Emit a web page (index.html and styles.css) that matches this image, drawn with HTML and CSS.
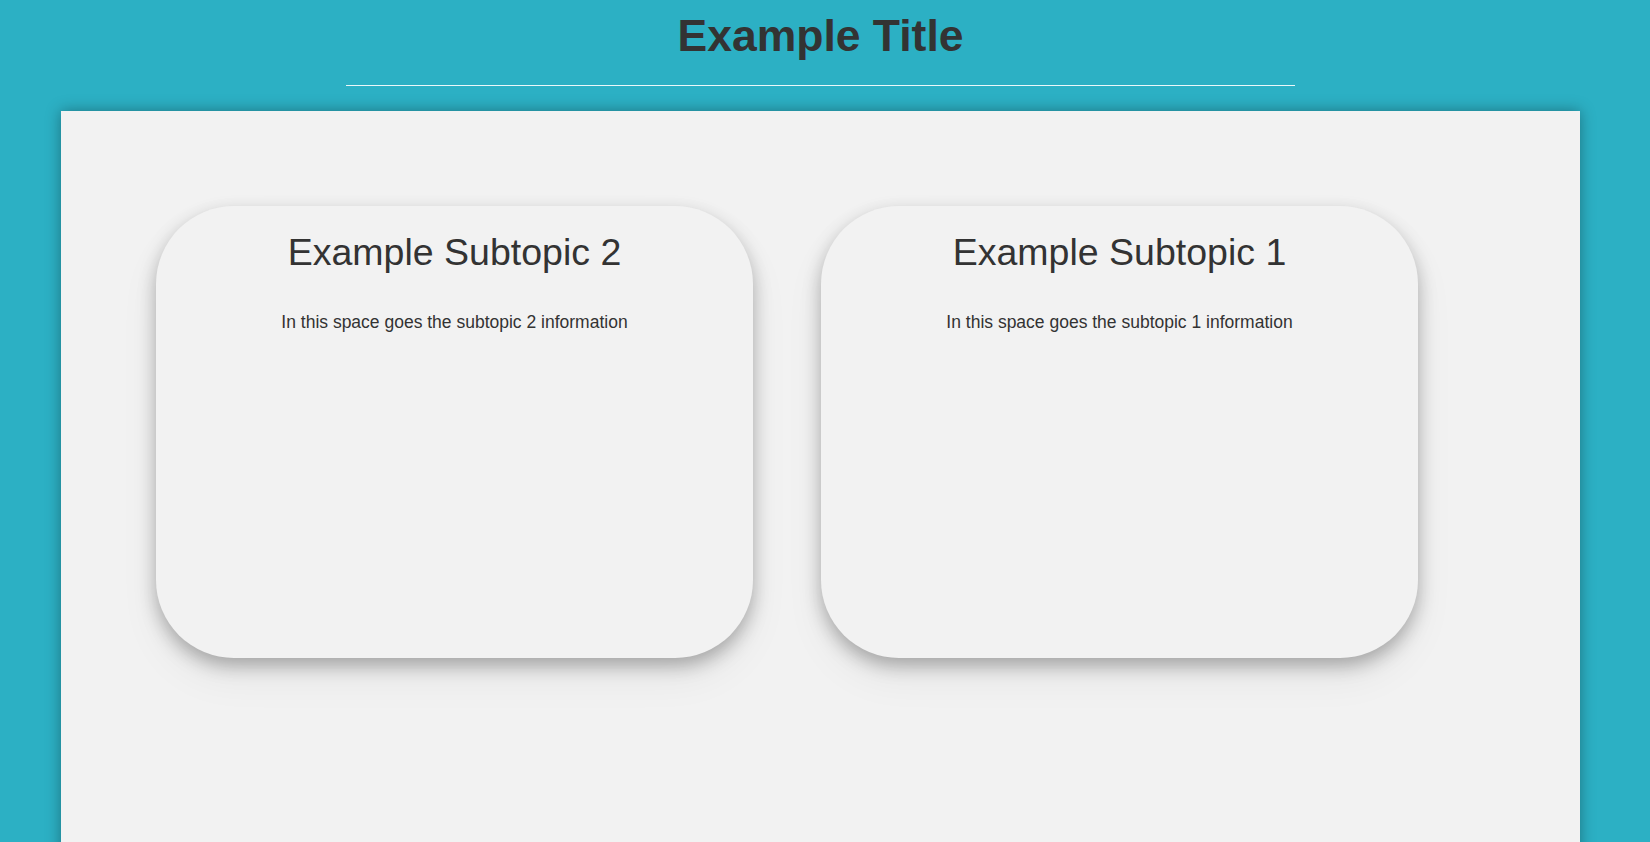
FILE: index.html
```html
<!DOCTYPE html>
<html lang="en">
<head>
<meta charset="utf-8">
<title>Example Title</title>
<link rel="stylesheet" href="styles.css">
</head>
<body>
<div class="page">
  <header class="header">
    <h1 class="title">Example Title</h1>
    <div class="rule"></div>
  </header>
  <main class="panel">
    <section class="card">
      <h2 class="card-title">Example Subtopic 2</h2>
      <p class="card-text">In this space goes the subtopic 2 information</p>
    </section>
    <section class="card">
      <h2 class="card-title">Example Subtopic 1</h2>
      <p class="card-text">In this space goes the subtopic 1 information</p>
    </section>
  </main>
</div>
</body>
</html>
```
FILE: styles.css
```css
html, body {
  margin: 0;
  padding: 0;
  background: #2cb0c4;
  overflow: hidden;
}
body {
  font-family: "Liberation Sans", Arial, sans-serif;
  color: #333333;
  height: 842px;
}
.page {
  width: 1641px;
  display: flex;
  flex-direction: column;
  align-items: center;
}
.header {
  display: flex;
  flex-direction: column;
  align-items: center;
  width: 100%;
}
.title {
  margin: 11px 0 0;
  font-size: 44.5px;
  line-height: 50px;
  font-weight: bold;
  color: #333333;
}
.rule {
  width: 949px;
  height: 1px;
  background: rgba(255, 255, 255, 0.9);
  margin-top: 24px;
}
.panel {
  margin-top: 25px;
  width: 1519px;
  height: 760px;
  box-sizing: border-box;
  background: #f2f2f2;
  box-shadow: 0 0 14px rgba(0, 0, 0, 0.35);
  padding: 95px;
  display: flex;
  align-items: flex-start;
  gap: 68px;
}
.card {
  width: 597px;
  height: 452px;
  box-sizing: border-box;
  border-radius: 78px;
  background: #f2f2f2;
  box-shadow: 0 8px 18px rgba(0, 0, 0, 0.28), 0 20px 40px rgba(0, 0, 0, 0.06);
  padding-top: 24px;
  text-align: center;
}
.card-title {
  margin: 0;
  font-size: 37.5px;
  line-height: 44px;
  font-weight: normal;
  color: #333333;
}
.card-text {
  margin: 37px 0 0;
  font-size: 17.5px;
  line-height: 22px;
  color: #333333;
}
```
